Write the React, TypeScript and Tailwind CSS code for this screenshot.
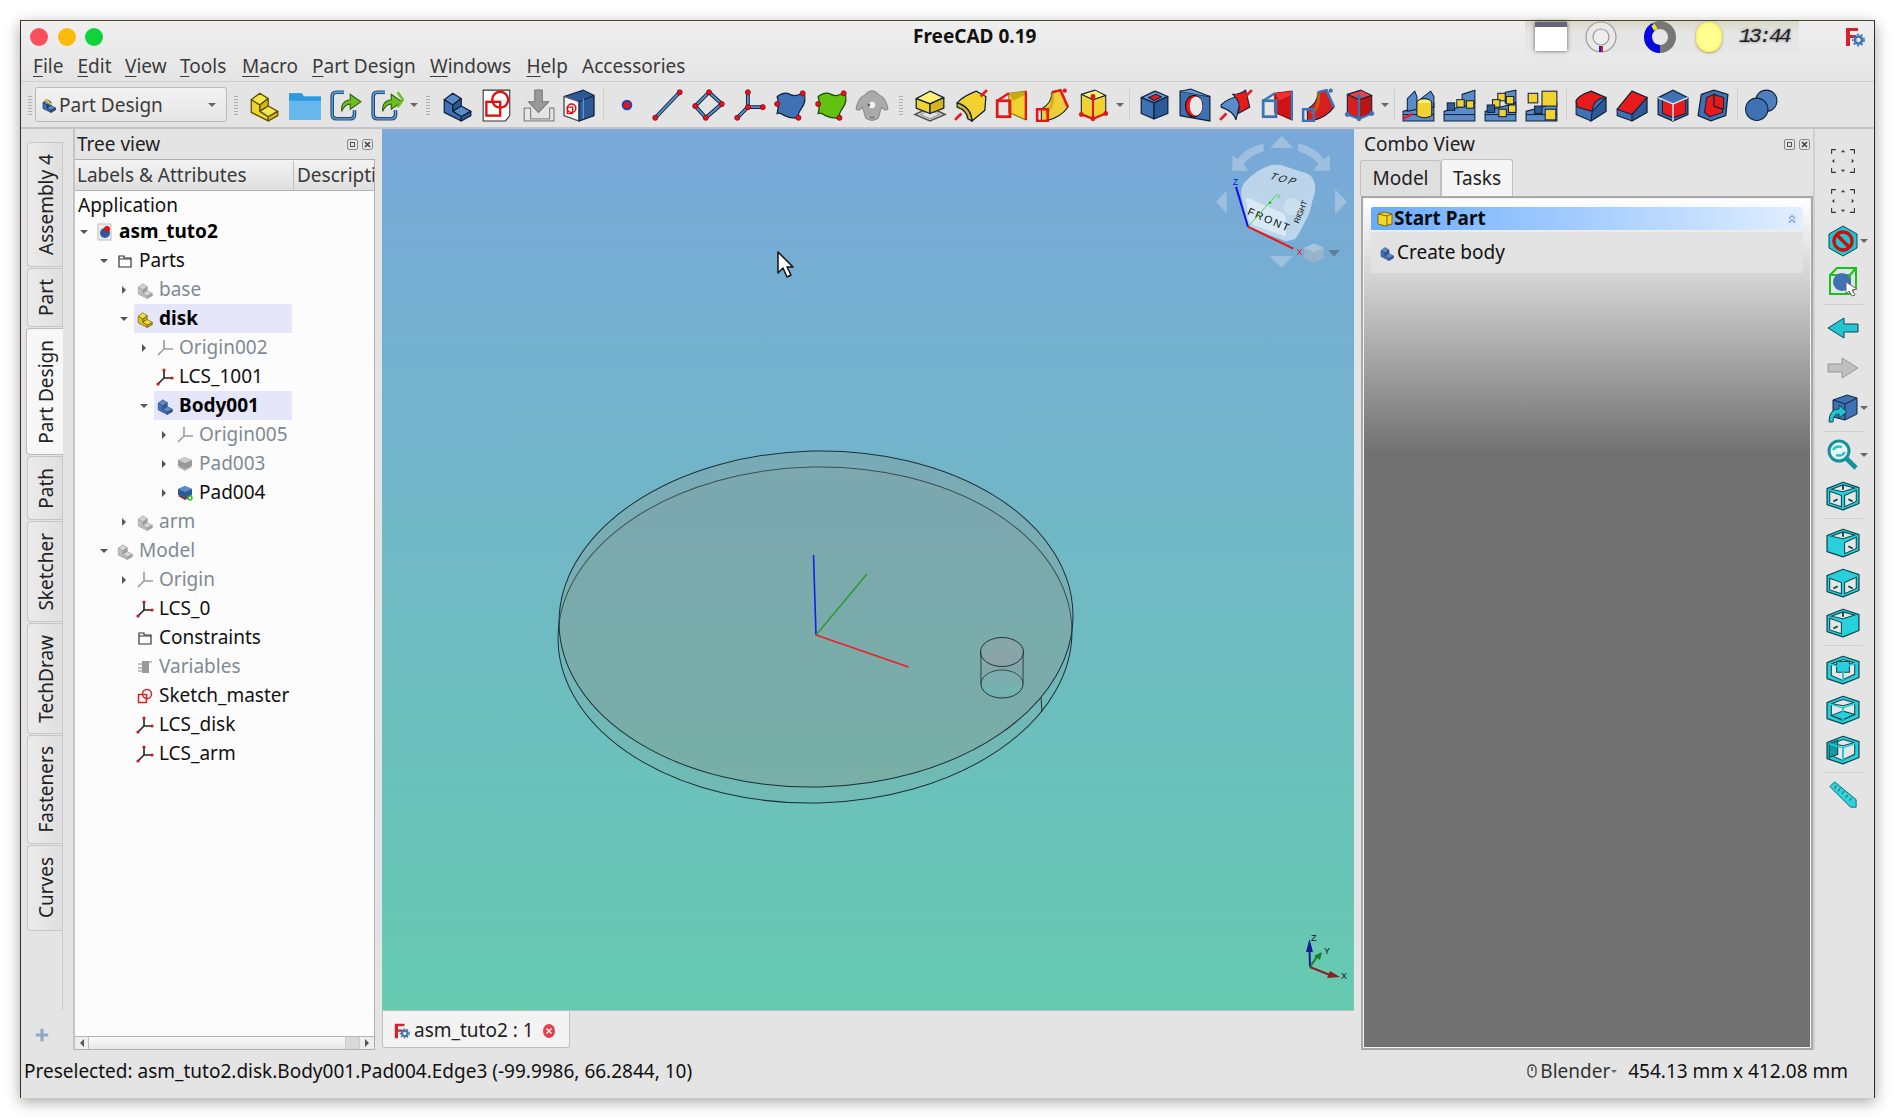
import React from "react";

const Ic = ({ s = 34, children }: { s?: number; children: React.ReactNode }) => (
  <svg width={s} height={s} viewBox="0 0 32 32" className="shrink-0">
    {children}
  </svg>
);

const D = "#12233a";

const Stepped = ({ t, l, r, st = D }: { t: string; l: string; r: string; st?: string }) => (
  <g stroke={st} strokeWidth="1.2" strokeLinejoin="round">
    <path d="M4 11L12 5L20 10L12 16Z" fill={t} />
    <path d="M12 16L20 10V17L12 22Z" fill={r} />
    <path d="M12 22L20 17L29 22L20 27Z" fill={t} />
    <path d="M4 11L12 16V22L20 27V31L4 23Z" fill={l} />
    <path d="M20 27L29 22V26L20 31Z" fill={r} />
  </g>
);

const Box = ({ t, l, r, st = D }: { t: string; l: string; r: string; st?: string }) => (
  <g stroke={st} strokeWidth="1.2" strokeLinejoin="round">
    <path d="M4 9L17 3L29 8L16 14Z" fill={t} />
    <path d="M4 9L16 14V29L4 24Z" fill={l} />
    <path d="M16 14L29 8V24L16 29Z" fill={r} />
  </g>
);

const Pt = ({ x, y, r = 2.4 }: { x: number; y: number; r?: number }) => (
  <circle cx={x} cy={y} r={r} fill="#e8121c" stroke="#7a0a10" strokeWidth="0.7" />
);

const Y = { t: "#fff176", l: "#f2d230", r: "#d8b41a" };
const B = { t: "#5a8ccc", l: "#3f72b4", r: "#2c5a98" };
const R = { t: "#f04040", l: "#d81f1f", r: "#b81414" };

const Part = () => (
  <Ic>
    <Stepped t="#f7e64a" l="#ecd42c" r="#d4b61a" st="#5c5000" />
  </Ic>
);
const Folder = () => (
  <Ic>
    <path d="M1 5H13L15 8H31V30H1Z" fill="#67b6ec" />
    <path d="M1 5H13L15 8H31V12H1Z" fill="#2b9ae0" />
  </Ic>
);
const Reload = ({ dbl = false }: { dbl?: boolean }) => (
  <Ic>
    <path d="M14 4H7Q3 4 3 8V25Q3 29 7 29H20Q24 29 24 25V21" fill="none" stroke="#1d4f7c" strokeWidth="3.4" />
    <path d="M14 4H7Q3 4 3 8V25Q3 29 7 29H20Q24 29 24 25V21" fill="none" stroke="#6aa5d8" strokeWidth="1.2" />
    <path d="M12 22Q11 12 20 11V6L30 13L20 20V15Q15 15 12 22Z" fill="#6bbf21" stroke="#2c5a0a" strokeWidth="1" />
    {dbl && <path d="M26 4L31 11L26 18" fill="none" stroke="#6bbf21" strokeWidth="2.4" />}
  </Ic>
);
const BodyIc = () => (
  <Ic>
    <Stepped t={B.t} l={B.l} r={B.r} />
  </Ic>
);
const SketchIc = () => (
  <Ic>
    <path d="M3 2H28V26L24 31H3Z" fill="#fff" stroke="#333" strokeWidth="1" />
    <rect x="6" y="13" width="13" height="13" fill="none" stroke="#d11" strokeWidth="2.2" />
    <circle cx="19" cy="11" r="7.5" fill="none" stroke="#d11" strokeWidth="2.2" />
  </Ic>
);
const ImportIc = () => (
  <Ic>
    <path d="M3 19H9V29H27V19H31V31H3Z" fill="#e8e8e8" stroke="#888" strokeWidth="1.2" />
    <path d="M13 2H20V13H26L16.5 23L7 13H13Z" fill="#999" stroke="#777" strokeWidth="1" />
  </Ic>
);
const Binder = () => (
  <Ic>
    <path d="M2 8L20 2L30 7V26L16 31L2 26Z" fill="#2c5a98" stroke={D} />
    <path d="M2 8L16 13V31L2 26Z" fill="#f4f4f4" stroke="#555" />
    <circle cx="9" cy="19" r="4" fill="none" stroke="#d11" strokeWidth="1.4" />
    <rect x="5" y="18" width="5" height="6" fill="none" stroke="#d11" strokeWidth="1.2" />
    <path d="M16 13L30 7V26L16 31Z" fill="#2c5a98" stroke={D} />
    <path d="M20 10V29" stroke="#6aa5d8" strokeWidth="1" />
  </Ic>
);
const DPoint = () => (
  <Ic>
    <circle cx="16" cy="16" r="4" fill="#e8121c" stroke="#2444a8" strokeWidth="2" />
  </Ic>
);
const Blue = (d: string) => (
  <>
    <path d={d} fill="none" stroke="#12233a" strokeWidth="3.6" strokeLinejoin="round" />
    <path d={d} fill="none" stroke="#5a8ccc" strokeWidth="1.8" strokeLinejoin="round" />
  </>
);
const DLine = () => (
  <Ic>
    {Blue("M4 28L27 4")}
    <Pt x={4} y={28} />
    <Pt x={27} y={4} />
  </Ic>
);
const DPlane = () => (
  <Ic>
    {Blue("M16 4L28 15L13 28L3 17Z")}
    <Pt x={16} y={4} />
    <Pt x={28} y={15} />
    <Pt x={13} y={28} />
    <Pt x={3} y={17} />
  </Ic>
);
const DLcs = () => (
  <Ic>
    {Blue("M14 4V18L4 28M14 18H28")}
    <Pt x={14} y={4} />
    <Pt x={14} y={18} />
    <Pt x={28} y={18} />
    <Pt x={4} y={28} />
  </Ic>
);
const Surface = ({ c, c2 }: { c: string; c2: string }) => (
  <Ic>
    <path d="M3 8Q10 3 15 6T28 4Q31 12 26 19T24 28Q15 29 10 26T3 24Q5 15 3 8Z" fill={c} stroke={c2} strokeWidth="1.2" />
    <Pt x={27} y={5} />
    <Pt x={23} y={28} />
    <Pt x={3} y={15} />
  </Ic>
);
const Sheep = () => (
  <Ic>
    <path d="M10 6Q16 -1 22 6Q30 10 31 20Q28 22 25 18L22 28Q16 33 10 28L7 18Q4 22 1 20Q2 10 10 6Z" fill="#aaa" stroke="#8a8a8a" />
    <circle cx="16" cy="16" r="3" fill="#f2f2f2" />
    <circle cx="13" cy="16" r="1.4" fill="#666" />
    <path d="M14 27Q16 29 18 27" fill="none" stroke="#666" />
  </Ic>
);
const PadY = () => (
  <Ic>
    <path d="M2 25L16 18L30 25L16 31Z" fill="none" stroke="#555" strokeWidth="1.6" />
    <path d="M7 25L16 20.5L25 25L16 29Z" fill="none" stroke="#999" strokeWidth="1" />
    <g stroke={D} strokeWidth="1.2" strokeLinejoin="round">
      <path d="M3 10L16 3L29 9L16 15Z" fill={Y.t} />
      <path d="M3 10L16 15V24L3 19Z" fill={Y.l} />
      <path d="M16 15L29 9V19L16 24Z" fill={Y.r} />
    </g>
  </Ic>
);
const Rev = ({ a, b, c }: { a: string; b: string; c: string }) => (
  <Ic>
    <path d="M3 14Q8 8 21 3L30 8L29 21L17 31Q16 18 3 14Z" fill={a} stroke={D} strokeWidth="1.2" />
    <path d="M17 31Q16 18 3 14L3 18Q12 21 13 29Z" fill={b} stroke={D} strokeWidth="1.2" />
    <path d="M1 30L7 24M25 8L31 2" stroke={c} strokeWidth="2.6" />
  </Ic>
);
const Loft = ({ a, b, c, sq }: { a: string; b: string; c: string; sq: string }) => (
  <Ic>
    <path d="M14 5L30 3V30L14 23Z" fill={a} stroke={c} strokeWidth="1" />
    <path d="M14 5L30 3L30 6L18 12Z" fill={b} />
    <rect x="3" y="12" width="12" height="15" fill="none" stroke={sq} strokeWidth="2.6" />
    <path d="M14 5L3 12M30 3L30 30" stroke={sq} strokeWidth="2.2" />
  </Ic>
);
const Pipe = ({ a, sq }: { a: string; sq: string }) => (
  <Ic>
    <path d="M6 20Q16 14 16 4L24 2L31 18Q24 28 10 31L6 31Z" fill={a} stroke={D} strokeWidth="1" />
    <path d="M16 4Q18 18 10 24" fill="none" stroke="#b99400" strokeWidth="3" opacity="0.5" />
    <path d="M16 4L24 2L31 18" fill="none" stroke={sq} strokeWidth="2.4" />
    <rect x="2" y="20" width="10" height="11" fill="none" stroke={sq} strokeWidth="2.4" />
    <circle cx="28" cy="2.5" r="2" fill={sq} />
  </Ic>
);
const Prim = ({ t, l, r, q }: { t: string; l: string; r: string; q: string }) => (
  <Ic>
    <g strokeLinejoin="round" stroke={D} strokeWidth="1">
      <path d="M5 6L18 2L28 7L16 11Z" fill={t} />
      <path d="M5 6L16 11V29L5 24Z" fill={l} />
      <path d="M16 11L28 7V24L16 29Z" fill={r} />
    </g>
    <path d="M16 8V29M5 25L16 29L28 24" fill="none" stroke={q} strokeWidth="2" />
    <circle cx="16" cy="8" r="2.3" fill={q} />
    <circle cx="5" cy="25" r="2.3" fill={q} />
    <circle cx="16" cy="29" r="2.3" fill={q} />
    <circle cx="28" cy="24" r="2.3" fill={q} />
  </Ic>
);
const Pocket = () => (
  <Ic>
    <Box t="#6a9ad6" l="#3f72b4" r="#2c5a98" />
    <path d="M11 9L18 6L23 8.5L16 12Z" fill="#e81a1a" stroke={D} />
  </Ic>
);
const Hole = () => (
  <Ic>
    <path d="M2 3L30 8V31L2 26Z" fill="#3f72b4" stroke={D} strokeWidth="1.2" />
    <path d="M2 3L12 1L30 8" fill="#6a9ad6" stroke={D} />
    <ellipse cx="15" cy="17" rx="8" ry="10" fill="#e81a1a" stroke="#300" />
    <ellipse cx="17" cy="17" rx="6" ry="9" fill="#e9e9e9" />
  </Ic>
);
const Groove = () => (
  <Ic>
    <path d="M2 16Q10 8 21 8L16 30Q14 22 2 18Z" fill="#5a8ccc" stroke={D} />
    <path d="M13 6Q20 6 25 2L29 18L18 24Q22 14 13 6Z" fill="#e81a1a" stroke={D} />
    <path d="M1 30L7 24M25 8L31 2" stroke="#e81a1a" strokeWidth="2.6" />
  </Ic>
);
const Multi = ({ k }: { k: number }) => (
  <Ic>
    <path d="M1 22L30 14V31H1Z" fill="#5a8ccc" stroke={D} />
    <path d="M1 25H30" stroke={D} />
    {k === 0 && (
      <>
        <path d="M5 22V10L12 3L14 8V20Z" fill="#5a8ccc" stroke={D} />
        <path d="M18 10L27 3L30 8V18L18 21Z" fill="#5a8ccc" stroke={D} />
        <ellipse cx="21" cy="14" rx="7" ry="4" fill="#fff176" stroke={D} />
        <path d="M14 14V26Q21 30 28 26V14" fill="#f2d230" stroke={D} />
        <path d="M1 29L10 24" stroke="#e81a1a" strokeWidth="2.4" />
      </>
    )}
    {k === 1 && (
      <>
        <path d="M18 6L30 2V14L18 18Z" fill="#5a8ccc" stroke={D} />
        <rect x="4" y="14" width="7" height="7" fill="#2c5a98" stroke={D} />
        <rect x="13" y="11" width="7" height="7" fill="#f2d230" stroke={D} />
        <rect x="22" y="12" width="7" height="7" fill="#f2d230" stroke={D} />
      </>
    )}
    {k === 2 && (
      <>
        <path d="M20 4L30 2V14H20Z" fill="#5a8ccc" stroke={D} />
        <rect x="13" y="5" width="7" height="7" fill="#f2d230" stroke={D} />
        <rect x="21" y="8" width="7" height="7" fill="#f2d230" stroke={D} />
        <rect x="8" y="11" width="7" height="7" fill="#f2d230" stroke={D} />
        <rect x="3" y="16" width="7" height="7" fill="#2c5a98" stroke={D} />
        <rect x="14" y="20" width="7" height="7" fill="#f2d230" stroke={D} />
        <rect x="23" y="16" width="7" height="7" fill="#f2d230" stroke={D} />
      </>
    )}
    {k === 3 && (
      <>
        <rect x="16" y="3" width="14" height="14" fill="#f2d230" stroke={D} />
        <rect x="3" y="5" width="9" height="9" fill="#f2d230" stroke={D} />
        <rect x="9" y="17" width="7" height="7" fill="#2c5a98" stroke={D} />
        <rect x="19" y="20" width="10" height="10" fill="#f2d230" stroke={D} />
      </>
    )}
  </Ic>
);
const Fillet = () => (
  <Ic>
    <path d="M2 12Q4 7 16 3L30 9V22L16 31L2 25Z" fill="#3f72b4" stroke={D} />
    <path d="M2 12Q4 7 16 3L30 9Q18 10 17 22L3 18Z" fill="#e81a1a" stroke={D} />
    <path d="M17 22L30 9V22L16 31Z" fill="#2c5a98" stroke={D} />
  </Ic>
);
const Chamfer = () => (
  <Ic>
    <path d="M2 20L16 3L30 9V23L16 31L2 26Z" fill="#3f72b4" stroke={D} />
    <path d="M2 20L16 3L30 9L16 25Z" fill="#e81a1a" stroke={D} />
    <path d="M16 25L30 9V23L16 31Z" fill="#2c5a98" stroke={D} />
  </Ic>
);
const Draft = () => (
  <Ic>
    <path d="M2 9L16 2L30 9V25L16 31L2 25Z" fill="#3f72b4" stroke={D} strokeWidth="1.2" />
    <path d="M6 11L16 15V28L6 24Z" fill="#e81a1a" stroke={D} />
    <path d="M16 15L28 10V24L16 28Z" fill="#e81a1a" stroke={D} />
    <path d="M2 9L16 15L30 9M16 15V31" fill="none" stroke="#dfe8f5" strokeWidth="1.4" />
  </Ic>
);
const Thick = () => (
  <Ic>
    <path d="M5 6L17 2L30 6L28 26L14 31L2 26Z" fill="#3f72b4" stroke={D} strokeWidth="1.2" />
    <path d="M10 9L17 6V17L25 20V23L13 27L8 23Z" fill="#e81a1a" stroke={D} />
    <path d="M17 6L26 9V20L17 17Z" fill="#e81a1a" stroke={D} />
  </Ic>
);
const Spheres = () => (
  <Ic>
    <circle cx="21" cy="12" r="10" fill="#4f7fbe" stroke={D} />
    <circle cx="12" cy="20" r="10.5" fill="#3f72b4" stroke={D} />
  </Ic>
);

const Handle = ({ w }: { w: string }) => (
  <div className={`${w} flex justify-center`}>
    <div className="h-[20px] w-[4px] bg-[radial-gradient(#aaa_35%,transparent_40%)] bg-[length:2px_3px]" />
  </div>
);
const Sep = ({ w }: { w: string }) => (
  <div className={`${w} flex justify-center`}>
    <div className="h-[32px] w-px bg-[#cfcfcf]" />
  </div>
);
const TI = ({ children }: { children: React.ReactNode }) => (
  <div className="flex w-[40.9px] shrink-0 items-center justify-center">{children}</div>
);
const Caret = () => (
  <div className="flex w-[12px] shrink-0 justify-center">
    <div className="h-0 w-0 border-x-[4px] border-t-[4px] border-x-transparent border-t-[#666]" />
  </div>
);

const Toolbar = () => (
  <div className="flex h-[47px] shrink-0 items-center border-b-2 border-[#c4c4c4] pl-[4px]">
    <Handle w="w-[10px]" />
    <div className="flex h-[35px] w-[192px] items-center rounded-[3px] border border-[#b9b9b9] bg-[linear-gradient(#f2f2f2,#e6e6e6)] pl-[5px] pr-[10px]">
      <Ic s={16}>
        <Stepped t={B.t} l={B.l} r={B.r} />
        <path d="M8 4L20 15" stroke="#e6cf30" strokeWidth="4" />
      </Ic>
      <span className="ml-[2px] flex-1 pt-[1px] text-[19px] text-[#3b3b3b]">Part Design</span>
      <div className="h-0 w-0 border-x-[4px] border-t-[4px] border-x-transparent border-t-[#666]" />
    </div>
    <Handle w="w-[17px]" />
    <TI><Part /></TI>
    <TI><Folder /></TI>
    <TI><Reload /></TI>
    <TI><Reload dbl /></TI>
    <Caret />
    <Handle w="w-[16.5px]" />
    <TI><BodyIc /></TI>
    <TI><SketchIc /></TI>
    <TI><ImportIc /></TI>
    <TI><Binder /></TI>
    <Sep w="w-[7px]" />
    <TI><DPoint /></TI>
    <TI><DLine /></TI>
    <TI><DPlane /></TI>
    <TI><DLcs /></TI>
    <TI><Surface c="#3f72b4" c2="#12233a" /></TI>
    <TI><Surface c="#62c210" c2="#1c4a08" /></TI>
    <TI><Sheep /></TI>
    <Handle w="w-[16.4px]" />
    <TI><PadY /></TI>
    <TI><Rev a="#f2d230" b="#d8b41a" c="#e81a1a" /></TI>
    <TI><Loft a="#f2d230" b="#c9a818" c="#8a7000" sq="#e01818" /></TI>
    <TI><Pipe a="#eecf3a" sq="#e01818" /></TI>
    <TI><Prim t={Y.t} l={Y.l} r={Y.l} q="#e01818" /></TI>
    <Caret />
    <Sep w="w-[8px]" />
    <TI><Pocket /></TI>
    <TI><Hole /></TI>
    <TI><Groove /></TI>
    <TI><Loft a="#cf1212" b="#ee3030" c="#700" sq="#3f72b4" /></TI>
    <TI><Pipe a="#d81f1f" sq="#3f72b4" /></TI>
    <TI><Prim t={R.t} l={R.l} r={R.r} q="#3f72b4" /></TI>
    <Caret />
    <Sep w="w-[7.7px]" />
    <TI><Multi k={0} /></TI>
    <TI><Multi k={1} /></TI>
    <TI><Multi k={2} /></TI>
    <TI><Multi k={3} /></TI>
    <Sep w="w-[8px]" />
    <TI><Fillet /></TI>
    <TI><Chamfer /></TI>
    <TI><Draft /></TI>
    <TI><Thick /></TI>
    <Sep w="w-[6.4px]" />
    <TI><Spheres /></TI>
  </div>
);

const FcLogo = ({ s = 20 }: { s?: number }) => (
  <svg width={s} height={s} viewBox="0 0 20 20" className="shrink-0">
    <path d="M1 1H13V4H5V8H11V11H5V19H1Z" fill="#d3222a" />
    <circle cx="13.5" cy="13" r="3.5" fill="none" stroke="#3f72b4" strokeWidth="2.6" />
    <circle cx="13.5" cy="13" r="5.6" fill="none" stroke="#3f72b4" strokeWidth="1.6" strokeDasharray="2 2" />
  </svg>
);

const TitleBar = () => (
  <div className="flex h-[31px] shrink-0 items-center pl-[9px]">
    <div className="h-[18px] w-[18px] rounded-full bg-[#f9505e]" />
    <div className="ml-[10px] h-[18px] w-[18px] rounded-full bg-[#fdba0c]" />
    <div className="ml-[9px] h-[18px] w-[18px] rounded-full bg-[#10d23c]" />
    <div className="ml-[810px] w-[122px] whitespace-nowrap text-center text-[19px] font-bold leading-none text-[#111]">FreeCAD 0.19</div>
    <div className="ml-[490px] flex h-[31px] w-[274px] items-center bg-[linear-gradient(#d7d9c8,#e6e6e6_40%)]">
      <div className="ml-[10px] h-[29px] w-[32px] border-t-[5px] border-[#667] bg-white shadow-[0_0_4px_rgba(0,0,0,.6)]" />
      <svg width="34" height="36" viewBox="0 0 34 36" className="ml-[17px]">
        <circle cx="17" cy="18" r="15" fill="#e9e9e9" stroke="#999" strokeWidth="1.2" />
        <circle cx="17" cy="18" r="8" fill="#eee" stroke="#999" strokeWidth="1.2" />
        <path d="M15 27H19V33H15Z" fill="#2020d0" />
        <path d="M17 27H19V33H17Z" fill="#d02020" />
      </svg>
      <svg width="36" height="38" viewBox="0 0 36 38" className="ml-[24px]">
        <circle cx="18" cy="19" r="12" fill="none" stroke="#777" strokeWidth="8" />
        <path d="M12 8.6A12 12 0 0 0 18 31" fill="none" stroke="#0808e0" strokeWidth="8" />
        <path d="M11 7L14 12" stroke="#f0e020" strokeWidth="4" />
      </svg>
      <div className="ml-[18px] h-[30px] w-[26px] rounded-full bg-[radial-gradient(#ffff90_55%,#f0d820)] shadow-[0_1px_3px_rgba(120,100,0,.6)]" />
      <div className="ml-[17px] font-['Liberation_Mono',monospace] text-[21px] italic leading-none tracking-[-2.6px] text-[#222] [text-shadow:0_0_3px_rgba(0,0,0,.5)]">13:44</div>
    </div>
    <div className="ml-[46px]"><FcLogo /></div>
  </div>
);

const U = ({ k, r }: { k: string; r: string }) => (
  <span className="text-[#3b3b3b]"><span className="underline decoration-1 underline-offset-[3px]">{k}</span>{r}</span>
);
const MenuBar = () => (
  <div className="flex h-[30px] shrink-0 items-center border-b border-[#cdcdcd] text-[19px]">
    <div className="ml-[12px] w-[44.5px]"><U k="F" r="ile" /></div>
    <div className="w-[47.5px]"><U k="E" r="dit" /></div>
    <div className="w-[55px]"><U k="V" r="iew" /></div>
    <div className="w-[62px]"><U k="T" r="ools" /></div>
    <div className="w-[70px]"><U k="M" r="acro" /></div>
    <div className="w-[118px]"><U k="P" r="art Design" /></div>
    <div className="w-[96.5px]"><U k="W" r="indows" /></div>
    <div className="w-[55.5px]"><U k="H" r="elp" /></div>
    <div><U k="" r="Accessories" /></div>
  </div>
);

const tabs = [
  ["Assembly 4", "h-[125px]"],
  ["Part", "h-[59px]"],
  ["Part Design", "h-[127px]"],
  ["Path", "h-[64px]"],
  ["Sketcher", "h-[101px]"],
  ["TechDraw", "h-[111px]"],
  ["Fasteners", "h-[109px]"],
  ["Curves", "h-[86px]"],
];

const LeftTabs = () => (
  <div className="flex w-[52px] shrink-0 flex-col">
    <div className="flex-1 pt-[13px]">
      <div className="mr-[10px] flex flex-col items-end gap-[1px] border-r border-[#c8c8c8]">
        {tabs.map(([t, h]) => {
          const a = t === "Part Design";
          return (
            <div
              key={t}
              className={`${h} flex items-center justify-center rounded-l-[4px] border border-r-0 ${a ? "-mr-px w-[37px] border-[#bbb] bg-[#f7f7f7]" : "w-[35px] border-[#c6c6c6] bg-[linear-gradient(90deg,#ebebeb,#dfdfdf)]"}`}
            >
              <span className="ml-[2px] rotate-180 whitespace-nowrap text-[19px] leading-none text-[#222] [writing-mode:vertical-rl]">{t}</span>
            </div>
          );
        })}
      </div>
      <div className="mr-[10px] h-[79px] border-r border-[#c8c8c8]" />
    </div>
    <div className="flex h-[35px] justify-center pr-[24px] pt-[11px]">
      <svg width="18" height="18" viewBox="0 0 18 18" className="ml-[14px]">
        <path d="M7 1H11V7H17V11H11V17H7V11H1V7H7Z" fill="#8eaac6" />
      </svg>
    </div>
  </div>
);

const Axes = ({ g = false }: { g?: boolean }) => (
  <svg width="18" height="18" viewBox="0 0 18 18" className="shrink-0">
    <path d="M8 1V10L2 16M8 10H17" fill="none" stroke={g ? "#9a9a9a" : "#222"} strokeWidth="1.6" />
    {!g && (
      <>
        <circle cx="8" cy="2" r="1.6" fill="#d11" />
        <circle cx="16" cy="10" r="1.6" fill="#d11" />
        <circle cx="2" cy="16" r="1.6" fill="#d11" />
      </>
    )}
  </svg>
);
const SmallFolder = () => (
  <svg width="16" height="16" viewBox="0 0 16 16" className="shrink-0">
    <path d="M2 3H7V5H14V14H2Z" fill="#fff" stroke="#333" strokeWidth="1.2" />
    <path d="M2 6H14" stroke="#333" />
  </svg>
);
const Small = ({ t, l, r, st }: { t: string; l: string; r: string; st: string }) => (
  <Ic s={18}>
    <Stepped t={t} l={l} r={r} st={st} />
  </Ic>
);
const GrayPart = () => <Small t="#d4d4d4" l="#bdbdbd" r="#a0a0a0" st="#999" />;
const DocIc = () => (
  <svg width="16" height="18" viewBox="0 0 16 18" className="shrink-0">
    <rect x="1" y="1" width="13" height="16" fill="#eee" stroke="#bbb" />
    <circle cx="8" cy="10" r="5" fill="#2c5a98" />
    <circle cx="10" cy="6" r="3" fill="#d11" />
  </svg>
);
const PadTree = ({ gray = false }: { gray?: boolean }) => (
  <svg width="16" height="16" viewBox="0 0 16 16" className="shrink-0">
    <path d="M1 11L8 8L15 11L8 15Z" fill={gray ? "#bbb" : "#a22"} />
    <path d="M1 4L8 1L15 4V10L8 13L1 10Z" fill={gray ? "#999" : "#2c5a98"} />
    <path d="M1 4L8 7L15 4L8 1Z" fill={gray ? "#ccc" : "#5a8ccc"} />
    {!gray && <circle cx="13" cy="13" r="2" fill="#fff" stroke="#22c020" strokeWidth="1.4" />}
  </svg>
);
const Vars = () => (
  <svg width="16" height="16" viewBox="0 0 16 16" className="shrink-0">
    <rect x="5" y="2" width="7" height="12" fill="#999" />
    <path d="M1 5H5M1 9H5M1 12H5M12 3H15" stroke="#aaa" strokeWidth="1.4" />
  </svg>
);
const SketchTree = () => (
  <svg width="16" height="16" viewBox="0 0 16 16" className="shrink-0">
    <rect x="1.5" y="6.5" width="8" height="8" fill="none" stroke="#d22" strokeWidth="1.5" />
    <circle cx="10" cy="6" r="4.5" fill="none" stroke="#d22" strokeWidth="1.5" />
  </svg>
);

type Row = { lv: number; a?: "o" | "c"; i: React.ReactNode; t: string; g?: boolean; b?: boolean; h?: boolean };
const rows: Row[] = [
  { lv: 0, a: "o", i: <DocIc />, t: "asm_tuto2", b: true },
  { lv: 1, a: "o", i: <SmallFolder />, t: "Parts" },
  { lv: 2, a: "c", i: <GrayPart />, t: "base", g: true },
  { lv: 2, a: "o", i: <Small t="#f0e040" l="#dcc228" r="#c0a418" st="#6a5a00" />, t: "disk", b: true, h: true },
  { lv: 3, a: "c", i: <Axes g />, t: "Origin002", g: true },
  { lv: 3, i: <Axes />, t: "LCS_1001" },
  { lv: 3, a: "o", i: <Small t={B.t} l={B.l} r={B.r} st="#2c4a78" />, t: "Body001", b: true, h: true },
  { lv: 4, a: "c", i: <Axes g />, t: "Origin005", g: true },
  { lv: 4, a: "c", i: <PadTree gray />, t: "Pad003", g: true },
  { lv: 4, a: "c", i: <PadTree />, t: "Pad004" },
  { lv: 2, a: "c", i: <GrayPart />, t: "arm", g: true },
  { lv: 1, a: "o", i: <GrayPart />, t: "Model", g: true },
  { lv: 2, a: "c", i: <Axes g />, t: "Origin", g: true },
  { lv: 2, i: <Axes />, t: "LCS_0" },
  { lv: 2, i: <SmallFolder />, t: "Constraints" },
  { lv: 2, i: <Vars />, t: "Variables", g: true },
  { lv: 2, i: <SketchTree />, t: "Sketch_master" },
  { lv: 2, i: <Axes />, t: "LCS_disk" },
  { lv: 2, i: <Axes />, t: "LCS_arm" },
];

const TreeRow = ({ r }: { r: Row }) => (
  <div className="flex h-[29px] w-[217px] items-center" style={{ paddingLeft: 3 + 20 * r.lv }}>
    <div className="flex w-[12px] shrink-0 justify-center">
      {r.a === "o" && <div className="h-0 w-0 border-x-[4px] border-t-[4px] border-x-transparent border-t-[#555]" />}
      {r.a === "c" && <div className="h-0 w-0 border-y-[4px] border-l-[4px] border-y-transparent border-l-[#555]" />}
    </div>
    <div className={`ml-[4px] flex h-full flex-1 items-center gap-[6px] pl-[3px] ${r.h ? "bg-[#e6e6fb]" : ""}`}>
      <div className="flex w-[16px] justify-center">{r.i}</div>
      <span className={`whitespace-nowrap text-[19px] ${r.b ? "font-bold text-black" : r.g ? "text-[#7f8a94]" : "text-[#111]"}`}>{r.t}</span>
    </div>
  </div>
);

const DockBtns = () => (
  <div className="flex gap-[4px]">
    <div className="flex h-[11px] w-[11px] items-center justify-center rounded-[2px] border border-[#888] text-[8px]">
      <div className="h-[5px] w-[5px] border border-[#555]" />
    </div>
    <svg width="11" height="11" viewBox="0 0 11 11">
      <rect x="0.5" y="0.5" width="10" height="10" rx="2" fill="none" stroke="#888" />
      <path d="M3 3L8 8M8 3L3 8" stroke="#444" strokeWidth="1.6" />
    </svg>
  </div>
);

const TreeDock = () => (
  <div className="flex w-[309px] shrink-0 flex-col border-l-2 border-[#c4c4c4]">
    <div className="flex h-[30px] shrink-0 items-center justify-between pl-[2px] pr-[9px]">
      <span className="text-[19px] text-[#222]">Tree view</span>
      <DockBtns />
    </div>
    <div className="mr-[7px] flex flex-1 flex-col border border-l-0 border-[#b0b0b0] bg-[#fcfcfc]">
      <div className="flex h-[31px] shrink-0 overflow-hidden border-b border-[#b4b4b4] bg-[linear-gradient(#f3f3f3,#dfdfdf)] pt-[1px] text-[19px] text-[#3a3a3a]">
        <div className="w-[219px] shrink-0 border-r border-[#c0c0c0] pl-[2px]">Labels &amp; Attributes</div>
        <div className="pl-[3px]">Description</div>
      </div>
      <div className="flex-1">
        <div className="flex h-[26px] items-center pl-[3px] pt-[2px] text-[19px] text-[#111]">Application</div>
        {rows.map((r) => (
          <TreeRow key={r.t} r={r} />
        ))}
      </div>
      <div className="flex h-[13px] shrink-0 border-t border-[#b4b4b4] bg-[#eee]">
        <div className="flex w-[14px] items-center justify-center border-r border-[#bbb]">
          <div className="h-0 w-0 border-y-[4px] border-r-[4px] border-y-transparent border-r-[#555]" />
        </div>
        <div className="flex-1 bg-[linear-gradient(#fafafa,#e6e6e6)]" />
        <div className="w-[15px] border-x border-[#ccc] bg-[#d9d9d9]" />
        <div className="flex w-[14px] items-center justify-center">
          <div className="h-0 w-0 border-y-[4px] border-l-[4px] border-y-transparent border-l-[#555]" />
        </div>
      </div>
    </div>
  </div>
);

const NavCube = () => (
  <svg width="160" height="160" viewBox="0 0 480 480" className="absolute left-[818px] top-[-9px]">
    <g fill="#a8c6e0" fillOpacity="0.8">
      <path d="M245 47L280 84H210Z" />
      <path d="M48 245L80 212V280Z" />
      <path d="M441 245L405 208V283Z" />
      <path d="M245 443L208 408H278Z" />
      <path d="M190 70Q135 85 112 118L97 105V152H145L130 132Q150 107 192 93Z" />
      <path d="M295 70Q350 85 372 118L390 105V152H340L355 132Q335 107 294 93Z" />
    </g>
    <path d="M215 135Q170 145 130 192Q118 210 128 250L144 320L258 364L285 358Q320 310 345 215Q350 175 320 160L240 134Z" fill="#d8e7f3" fillOpacity="0.7" />
    <path d="M205 152Q215 148 310 175Q332 182 322 205L300 240Q280 250 250 240L160 210Q135 200 150 190Z" fill="#bcd4e9" fillOpacity="0.85" />
    <path d="M138 232L250 280Q260 290 258 310V350L160 315Q148 310 145 295Z" fill="#dcebf6" fillOpacity="0.9" />
    <path d="M272 280L335 230Q340 250 325 290L285 350Q270 360 268 340Z" fill="#bcd4e9" fillOpacity="0.7" />
    <circle cx="277" cy="260" r="26" fill="#d2e3f1" fillOpacity="0.7" />
    <text x="0" y="0" fontSize="30" fontFamily="Liberation Sans" fill="#111" transform="translate(206 176) rotate(14) skewX(-24)" textLength="76">TOP</text>
    <text x="0" y="0" fontSize="32" fontFamily="Liberation Sans" fill="#111" transform="translate(140 283) rotate(23)" textLength="132">FRONT</text>
    <text x="0" y="0" fontSize="24" fontFamily="Liberation Sans" fill="#111" transform="translate(296 312) rotate(-68)" textLength="72">RIGHT</text>
    <path d="M144 320L228 226" stroke="#3ce03c" strokeWidth="3" />
    <circle cx="210" cy="248" r="4" fill="#22c022" />
    <text x="228" y="238" fontSize="22" fontFamily="Liberation Sans" fill="#3ce03c">Y</text>
    <path d="M144 320L108 200" stroke="#1010f0" strokeWidth="6" />
    <path d="M144 320L280 386" stroke="#f01010" strokeWidth="6" />
    <text x="98" y="195" fontSize="26" fontFamily="Liberation Sans" fill="#1010f0">Z</text>
    <text x="290" y="405" fontSize="26" fontFamily="Liberation Sans" fill="#f01010">X</text>
    <path d="M312 384L342 370L372 384V414L342 428L312 414Z" fill="#96b4cd" stroke="#86a5c0" />
    <path d="M312 384L342 396L372 384L342 370Z" fill="#a8c4da" />
    <path d="M342 396V428" stroke="#86a5c0" />
    <path d="M384 390H420L402 410Z" fill="#5e7f9a" />
  </svg>
);

const Scene = () => (
  <svg width="972" height="882" viewBox="382 129 972 882" className="absolute left-0 top-0">
    <g stroke="#1e2e34" strokeWidth="1">
      <ellipse cx="815" cy="635" rx="257" ry="168" transform="rotate(-1.3 815 635)" fill="#8c968a" fillOpacity="0.15" />
      <ellipse cx="816" cy="619" rx="257" ry="168" transform="rotate(-1.3 816 619)" fill="#8c968a" fillOpacity="0.3" />
    </g>
    <ellipse cx="1002" cy="684" rx="21" ry="14" fill="#6dbdc0" fillOpacity="0.35" stroke="#24343a" strokeWidth="1" />
    <path d="M981 652V684M1023 652V684" stroke="#24343a" strokeWidth="1" />
    <path d="M981 654V684H1023V654" fill="#a09aa4" fillOpacity="0.2" stroke="none" />
    <ellipse cx="1002" cy="652" rx="21.5" ry="14.5" fill="#a09aa4" fillOpacity="0.35" stroke="#24343a" strokeWidth="1" />
    <path d="M1041 697L1042 712" stroke="#24343a" strokeWidth="1" />
    <path d="M816 635L813.5 555" stroke="#1a1aee" strokeWidth="1.6" />
    <path d="M816 635L867 574" stroke="#2a9a2a" strokeWidth="1.4" />
    <path d="M816 635L908.6 667" stroke="#ee2020" strokeWidth="1.6" />
    <g>
      <path d="M1310 967L1309.5 948" stroke="#1a1a90" strokeWidth="2" />
      <path d="M1309.5 939L1313 952H1306Z" fill="#1a1a90" />
      <path d="M1310 967L1318 955" stroke="#1d7d2a" strokeWidth="2" />
      <path d="M1322 952L1320 960L1314 956Z" fill="#1d7d2a" />
      <path d="M1310 967L1330 975" stroke="#8a2020" strokeWidth="2" />
      <path d="M1340 977L1327 978L1330 971Z" fill="#8a2020" />
      <text x="1311" y="941" fontSize="9" fontFamily="Liberation Sans" fill="#111">Z</text>
      <text x="1324" y="954" fontSize="9" fontFamily="Liberation Sans" fill="#111">Y</text>
      <text x="1341" y="979" fontSize="9" fontFamily="Liberation Sans" fill="#111">X</text>
    </g>
  </svg>
);

const Cursor = () => (
  <svg width="18" height="27" viewBox="0 0 18 27" className="absolute left-[394px] top-[122px]">
    <path d="M2 1V22L7 17L11 26L15 24L11 16H17Z" fill="#fff" stroke="#111" strokeWidth="1.5" strokeLinejoin="round" />
  </svg>
);

const Center = () => (
  <div className="flex w-[972px] shrink-0 flex-col">
    <div className="relative h-[882px] shrink-0 overflow-hidden border-b border-[#bcbcbc] bg-[linear-gradient(180deg,#79a8d9,#66cab0)]">
      <Scene />
      <NavCube />
      <Cursor />
    </div>
    <div className="flex h-[37px] items-start">
      <div className="flex h-[37px] w-[188px] items-center rounded-b-[3px] border border-t-0 border-[#c0c0c0] bg-[#f3f3f3] pl-[11px] pt-[3px] text-[19px] text-[#222]">
        <FcLogo s={16} />
        <span className="ml-[4px] whitespace-nowrap">asm_tuto2 : 1</span>
        <svg width="12" height="14" viewBox="0 0 12 14" className="ml-[9px]">
          <ellipse cx="6" cy="7" rx="6" ry="7" fill="#e0404f" />
          <path d="M3.5 4.5L8.5 9.5M8.5 4.5L3.5 9.5" stroke="#fff" strokeWidth="1.3" />
        </svg>
      </div>
    </div>
  </div>
);

const ComboDock = () => (
  <div className="flex w-[459px] shrink-0 flex-col">
    <div className="flex h-[30px] shrink-0 items-center justify-between pl-[10px] pr-[3px]">
      <span className="text-[19px] text-[#222]">Combo View</span>
      <DockBtns />
    </div>
    <div className="flex h-[37px] shrink-0 items-end pl-[6px] text-[19px] text-[#222]">
      <div className="flex h-[36px] w-[81px] items-center justify-center rounded-t-[3px] border border-b-0 border-[#c0c0c0] bg-[#dfdfdf]">Model</div>
      <div className="flex h-[37px] w-[72px] items-center justify-center rounded-t-[3px] border border-b-0 border-[#c0c0c0] bg-[#f5f5f5]">Tasks</div>
    </div>
    <div className="ml-[7px] flex-1 border-[2px] border-[#a8a8a8] bg-[linear-gradient(180deg,#ffffff,#717171_30%)] px-[8px] pt-[9px] shadow-[inset_0_0_0_1px_#f2f2f2]">
      <div className="flex h-[23px] items-center rounded-t-[2px] bg-[linear-gradient(90deg,#6aabff,#8fc1fd_30%,#bcdaff_70%,#e2efff)] pl-[6px] pr-[5px]">
        <svg width="16" height="16" viewBox="0 0 16 16" className="shrink-0">
          <path d="M1 3L7 1L15 3V13L8 15L1 13Z" fill="#f0d830" stroke="#7a6a00" />
          <path d="M1 3L10 5L15 3M10 5V15" fill="none" stroke="#7a6a00" />
        </svg>
        <span className="ml-[1px] flex-1 text-[19px] font-bold leading-none text-[#0b0b0b]">Start Part</span>
        <div className="flex h-[14px] w-[13px] items-center justify-center rounded-full bg-[#dfe8f4]">
          <svg width="8" height="10" viewBox="0 0 8 10">
            <path d="M1 4.5L4 1.5L7 4.5M1 8.5L4 5.5L7 8.5" fill="none" stroke="#5fa4f4" strokeWidth="1.2" />
          </svg>
        </div>
      </div>
      <div className="mt-[2px] flex h-[41px] items-center bg-[#e2e2e2] pl-[8px]">
        <Ic s={16}>
          <Stepped t={B.t} l={B.l} r={B.r} st="#2c4a78" />
        </Ic>
        <span className="ml-[2px] text-[19px] text-[#111]">Create body</span>
      </div>
    </div>
  </div>
);

const Fit = () => (
  <Ic s={28}>
    <path d="M3 8V3H8M24 3H29V8M3 24V29H8M29 24V29H24" fill="none" stroke="#333" strokeWidth="1.2" />
    <path d="M13.5 6H18.5L16 3.5ZM13.5 26H18.5L16 28.5ZM6 13.5V18.5L3.5 16ZM26 13.5V18.5L28.5 16Z" fill="#333" />
  </Ic>
);
const TealCube = ({ f }: { f: number }) => {
  const T = "#28d0dc";
  const W = "#e6e6e6";
  const S = "#0c4a50";
  return (
    <Ic s={34}>
      <path d="M1 10L16 4L31 9V24L16 30L1 25Z" fill={T} stroke={S} strokeWidth="1.2" strokeLinejoin="round" />
      {f >= 4 && <path d="M5 11L16 7L27 10L16 13ZM5 11V22L16 27V13ZM16 13L27 10V21L16 26Z" fill={W} stroke={S} />}
      {f !== 1 && f < 4 && <path d="M5 10.5L16 6.5L27 9.5L16 13Z" fill={W} stroke={S} />}
      {f !== 2 && f < 4 && <path d="M3.5 12.5L14.5 16.5V27L3.5 23.5Z" fill={W} stroke={S} />}
      {f !== 3 && f < 4 && <path d="M17.5 16.5L28.5 11.5V22L17.5 27Z" fill={W} stroke={S} />}
      {f === 4 && <path d="M10 9H22V19H10Z" fill={T} stroke={S} />}
      {f === 5 && <path d="M5 22L16 18L27 21L16 26Z" fill={T} stroke={S} />}
      {f === 6 && <path d="M3 11L11 8V21L3 24Z" fill="#149aa4" stroke={S} />}
      {f >= 4 && <path d="M16 13V27M3 11L16 15L29 10" fill="none" stroke={T} strokeWidth="1.6" />}
      {f < 4 && f !== 2 && <path d="M7 22L11 20" stroke={S} strokeWidth="1.6" />}
      {f < 4 && f !== 3 && <path d="M21 20L25 22" stroke={S} strokeWidth="1.6" />}
      {f < 4 && f !== 1 && <path d="M16 7V11" stroke={S} strokeWidth="1.8" />}
    </Ic>
  );
};
const RSep = () => <div className="my-[3px] h-px w-[40px] shrink-0 bg-[#cfcfcf]" />;
const RI = ({ children, dd, h = "h-[40px]" }: { children: React.ReactNode; dd?: boolean; h?: string }) => (
  <div className={`relative flex ${h} w-full shrink-0 items-center justify-center`}>
    {children}
    {dd && <div className="absolute right-[3px] h-0 w-0 border-x-[4px] border-t-[4px] border-x-transparent border-t-[#666]" />}
  </div>
);

const RightBar = () => (
  <div className="flex w-[61px] shrink-0 flex-col items-center border-l-2 border-[#d0d0d0] pr-[3px] pt-[12px]">
    <RI><Fit /></RI>
    <RI><Fit /></RI>
    <RI dd>
      <Ic s={32}>
        <path d="M16 1L30 9V23L16 31L2 23V9Z" fill="#22c4d0" stroke="#0c4a50" />
        <circle cx="16" cy="16" r="9" fill="none" stroke="#c81010" strokeWidth="3.4" />
        <path d="M10 10L22 22" stroke="#c81010" strokeWidth="3.4" />
      </Ic>
    </RI>
    <RI>
      <Ic s={32}>
        <path d="M3 10L10 3L29 3V22L23 29H3Z" fill="none" stroke="#16c516" strokeWidth="2" />
        <path d="M3 10H23V29M23 10L29 3" fill="none" stroke="#16c516" strokeWidth="2" />
        <circle cx="15" cy="17" r="9" fill="#3f72b4" />
        <path d="M19 17V29L22 26L25 31L28 30L25 25L30 24Z" fill="#fff" stroke="#666" />
      </Ic>
    </RI>
    <RSep />
    <RI>
      <Ic s={32}>
        <path d="M1 16L17 6V12H31V20H17V26Z" fill="#22c4d0" stroke="#0c4a50" />
      </Ic>
    </RI>
    <RI>
      <Ic s={32}>
        <path d="M31 16L15 6V12H1V20H15V26Z" fill="#c0c0c0" stroke="#999" />
      </Ic>
    </RI>
    <RI dd>
      <Ic s={32}>
        <path d="M6 8L20 3L30 6V22L18 28L6 25Z" fill="#3f72b4" stroke={D} />
        <path d="M6 8L18 12L30 6M18 12V28" fill="none" stroke={D} />
        <path d="M2 30Q2 17 12 17V13L20 20L12 26V22Q6 22 6 30Z" fill="#22c4d0" stroke="#0c4a50" />
      </Ic>
    </RI>
    <RSep />
    <RI dd>
      <Ic s={32}>
        <circle cx="12" cy="12" r="10" fill="#e9f7f8" stroke="#16909a" strokeWidth="3" />
        <path d="M6 11Q9 6 15 8M18 13Q15 18 9 16" fill="none" stroke="#22c4d0" strokeWidth="2.4" />
        <path d="M19 19L29 29" stroke="#16909a" strokeWidth="4.6" />
      </Ic>
    </RI>
    <RI><TealCube f={0} /></RI>
    <RSep />
    <RI><TealCube f={2} /></RI>
    <RI><TealCube f={1} /></RI>
    <RI><TealCube f={3} /></RI>
    <RSep />
    <RI><TealCube f={4} /></RI>
    <RI><TealCube f={5} /></RI>
    <RI><TealCube f={6} /></RI>
    <RSep />
    <RI h="h-[36px]">
      <Ic s={30}>
        <path d="M2 8L7 3L30 22V30H24Z" fill="#34d0dc" stroke="#0c6a70" />
        <path d="M9 7L7 10M13 10L11 13M17 13L15 16M21 17L19 20M25 20L23 23" stroke="#0c4a50" />
      </Ic>
    </RI>
  </div>
);

const StatusBar = () => (
  <div className="flex h-[48px] shrink-0 items-center justify-between pb-[6px] pl-[3px] pr-[26px] text-[19px] text-[#111]">
    <span className="whitespace-nowrap">Preselected: asm_tuto2.disk.Body001.Pad004.Edge3 (-99.9986, 66.2844, 10)</span>
    <div className="flex items-center">
      <svg width="10" height="14" viewBox="0 0 10 14">
        <rect x="1" y="1" width="8" height="12" rx="4" fill="none" stroke="#444" strokeWidth="1.3" />
        <path d="M5 3V7" stroke="#444" strokeWidth="1.4" />
      </svg>
      <span className="ml-[3px] text-[#333]">Blender</span>
      <div className="ml-[1px] h-0 w-0 border-x-[3px] border-t-[3px] border-x-transparent border-t-[#666]" />
      <span className="ml-[11px]">454.13 mm x 412.08 mm</span>
    </div>
  </div>
);

export default function App() {
  return (
    <div className="h-[1118px] w-[1895px] overflow-hidden bg-white p-[20px] pr-0 font-['Noto_Sans',sans-serif]">
      <div className="flex h-[1078px] w-[1855px] flex-col border-x border-t border-x-[#3a2c1c] border-t-[#4d4724] bg-[linear-gradient(#efefef,#e4e4e4_60px)] shadow-[0_4px_14px_rgba(0,0,0,.35)]">
        <TitleBar />
        <MenuBar />
        <Toolbar />
        <div className="flex h-[921px] shrink-0">
          <LeftTabs />
          <TreeDock />
          <Center />
          <ComboDock />
          <RightBar />
        </div>
        <StatusBar />
      </div>
    </div>
  );
}
